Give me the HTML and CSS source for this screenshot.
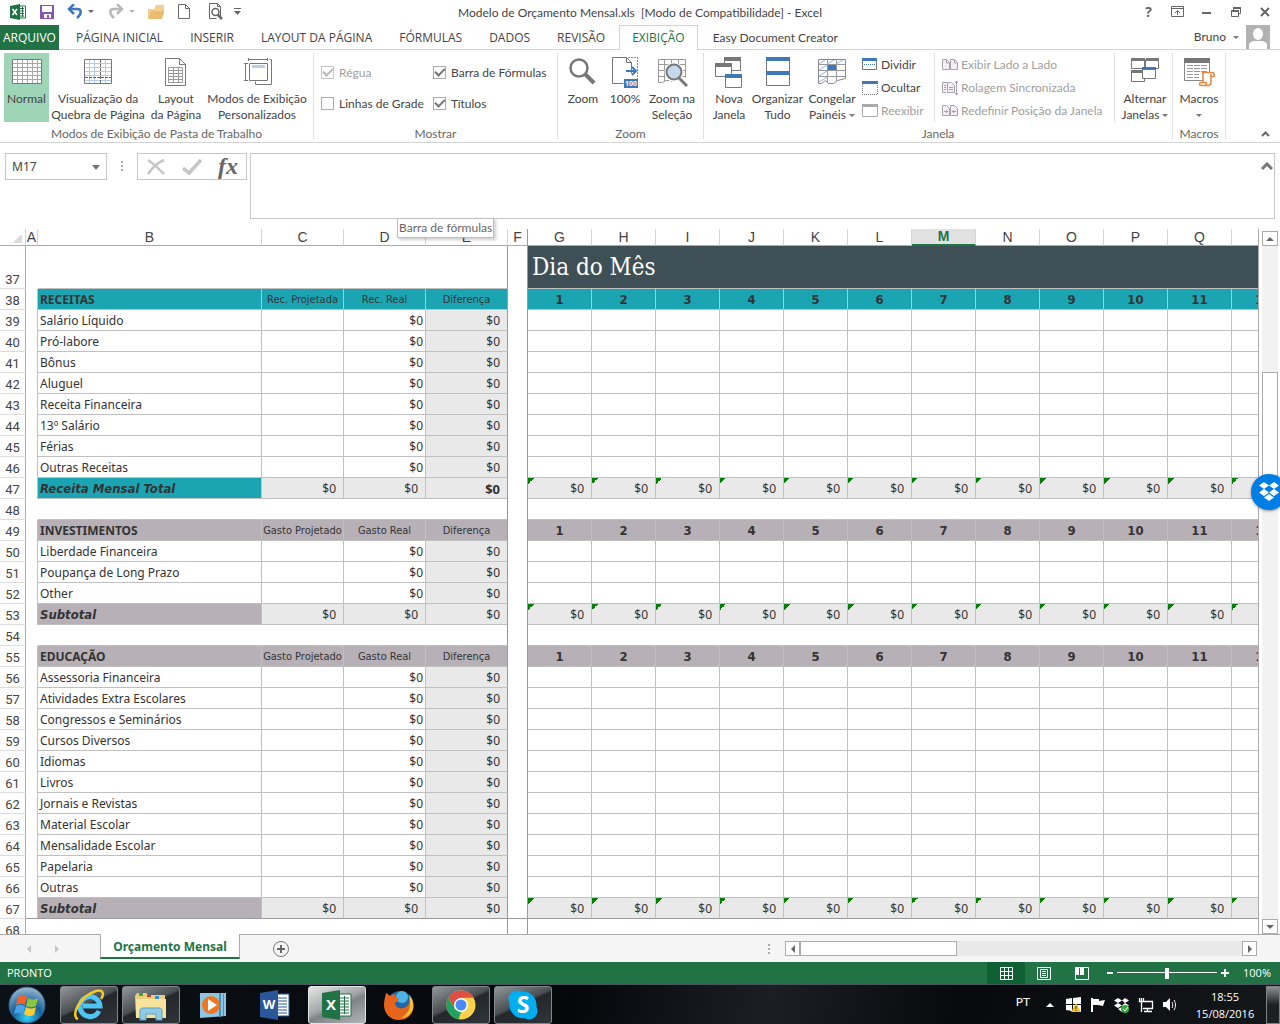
FILE: index.html
```html
<!DOCTYPE html>
<html lang="pt-BR">
<head>
<meta charset="utf-8">
<title>Modelo de Orçamento Mensal.xls - Excel</title>
<link rel="stylesheet" href="styles.css">
</head>
<body>
<header class="titlebar">
  <div class="quick">
    <span class="q q-app"><svg width="16" height="16" viewBox="0 0 16 16"><path d="M9 2h6.500v12H9z" fill="#fff" stroke="#217346"/><path d="M10 4.500h4M10 7h4M10 9.500h4M10 12h4M12.500 3v10" stroke="#217346"/><path d="M0 2l10-2v16L0 14z" fill="#217346"/><path d="M2.500 5l4.500 6M7 5l-4.500 6" stroke="#fff" stroke-width="1.600"/></svg></span>
    <button class="q q-save" aria-label="Salvar"><svg width="14" height="14" viewBox="0 0 14 14"><path d="M0 0h14v14H0z" fill="#8a55b0"/><path d="M2 1h10v6H2zM4 9h7v4H9v-3H7v3H4z" fill="#fff"/></svg></button>
    <button class="q q-undo" aria-label="Desfazer"><svg width="30" height="16" viewBox="0 0 30 16"><path d="M4 5h7c5 0 5 5 0 9" fill="none" stroke="#3f78b8" stroke-width="2.500"/><path d="M8 0L3 5l5 5" fill="none" stroke="#3f78b8" stroke-width="2.500"/><path d="M22 6h6l-3 3z" fill="#666"/></svg></button>
    <button class="q q-redo" aria-label="Refazer"><svg width="30" height="16" viewBox="0 0 30 16"><path d="M14 5H7c-5 0-5 5 0 9" fill="none" stroke="#b9b9b9" stroke-width="2.500"/><path d="M10 0l5 5-5 5" fill="none" stroke="#b9b9b9" stroke-width="2.500"/><path d="M22 6h6l-3 3z" fill="#b5b5b5"/></svg></button>
    <button class="q q-open" aria-label="Abrir"><svg width="16" height="14" viewBox="0 0 16 14"><path d="M0 13V4h6l2-4h8v10" fill="#f3cf92"/><path d="M0 14l3-8h13l-2 8z" fill="#eabc70"/></svg></button>
    <button class="q q-new" aria-label="Novo"><svg width="12" height="15" viewBox="0 0 12 15"><path d="M.5.500h7l4 4v10H.5zM7.500.500v4h4" fill="#fff" stroke="#666"/></svg></button>
    <button class="q q-prev" aria-label="Visualizar impressão"><svg width="15" height="17" viewBox="0 0 15 17"><path d="M12.500 15V3.500L9.500.500h-8v15h7M9.500.500v3h3" fill="none" stroke="#666"/><circle cx="7.500" cy="9" r="3.500" fill="#fff" stroke="#666" stroke-width="1.500"/><path d="M10 12l4 4" stroke="#666" stroke-width="2.500"/></svg></button>
    <button class="q q-more" aria-label="Personalizar"><svg width="7" height="8" viewBox="0 0 7 8"><path d="M0 .5h7" stroke="#666"/><path d="M0 3h7L3.500 7z" fill="#666"/></svg></button>
  </div>
  <h1 class="doc-title">Modelo de Orçamento Mensal.xls&nbsp; [Modo de Compatibilidade] - Excel</h1>
  <div class="winbtns">
    <button class="wb help" aria-label="Ajuda">?</button>
    <button class="wb" aria-label="Opções da faixa"><svg width="13" height="11" viewBox="0 0 13 11"><path d="M.5.500h12v10H.5zM1 2.500h11M6.500 9V5M4 7l2.500-2.500L9 7" fill="none" stroke="#666"/></svg></button>
    <button class="wb" aria-label="Minimizar"><svg width="9" height="9" viewBox="0 0 9 9"><path d="M0 5h9v2H0z" fill="#666"/></svg></button>
    <button class="wb" aria-label="Restaurar"><svg width="10" height="10" viewBox="0 0 10 10"><path d="M.5 4h7v5.500h-7zM2.500 3V1h7v5.500H8" fill="none" stroke="#666"/><path d="M0 3h8v2H0zM2 0h8v2H2z" fill="#666"/></svg></button>
    <button class="wb" aria-label="Fechar"><svg width="10" height="10" viewBox="0 0 10 10"><path d="M1 1l8 8M9 1L1 9" stroke="#666" stroke-width="2"/></svg></button>
  </div>
</header>

<nav class="tabs">
  <button class="tab file">ARQUIVO</button>
  <button class="tab">PÁGINA INICIAL</button>
  <button class="tab">INSERIR</button>
  <button class="tab">LAYOUT DA PÁGINA</button>
  <button class="tab">FÓRMULAS</button>
  <button class="tab">DADOS</button>
  <button class="tab">REVISÃO</button>
  <button class="tab active">EXIBIÇÃO</button>
  <button class="tab addin">Easy Document Creator</button>
  <button class="user">Bruno <i class="caret"></i>
    <svg width="24" height="24" viewBox="0 0 24 24"><path d="M0 0h24v24H0z" fill="#b2b2b2"/><ellipse cx="12" cy="9" rx="5" ry="6" fill="#fff"/><path d="M3 24v-4c0-3 4-4 6-4h6c2 0 6 1 6 4v4z" fill="#fff"/></svg>
  </button>
</nav>

<section class="ribbon">
  <div class="group g-views">
    <div class="tools">
      <button class="big on b-normal"><svg width="32" height="32" viewBox="0 0 32 32"><path d="M1.500 3.500h29v24h-29z" fill="#fff" stroke="#777"/><path d="M2 7.500h28M2 11.500h28M2 15.500h28M2 19.500h28M2 23.500h28M6.500 4v23M11.500 4v23M16.500 4v23M21.500 4v23M26.500 4v23" stroke="#a6a6a6"/></svg><span>Normal</span></button>
      <button class="big b-break"><svg width="32" height="32" viewBox="0 0 32 32"><path d="M2.500 3.500h27v24h-27z" fill="#fff" stroke="#777"/><path d="M3 7.500h26M3 11.500h26M3 15.500h26M3 19.500h26M3 24.500h26M7.500 4v23M12.500 4v23M23.500 4v23" stroke="#b3cdea"/><path d="M18.500 4v23M3 21.500h26" stroke="#666" stroke-dasharray="3 1"/></svg><span>Visualização da<br>Quebra de Página</span></button>
      <button class="big b-layout"><svg width="32" height="32" viewBox="0 0 32 32"><path d="M5.500 2.500h14l6 6v21h-20zM19.500 2.500v6h6" fill="#fff" stroke="#777"/><path d="M8.500 11.500h14v15h-14zM8 14.500h15M8 17.500h15M8 20.500h15M8 23.500h15M13.500 11v16M18.500 11v16" fill="none" stroke="#999"/></svg><span>Layout<br>da Página</span></button>
      <button class="big b-custom"><svg width="32" height="32" viewBox="0 0 32 32"><path d="M8.500 7.500h18v17h-18z" fill="#fff" stroke="#777"/><path d="M11 9h13v3H11z" fill="#b9cfea"/><path d="M7.500 3.500h19M7.500 2v3M26.500 2v3M4.500 7v17M3 7.500h4M3 24.500h4M28.500 3.500h2v25h-16v-3" fill="none" stroke="#777"/></svg><span>Modos de Exibição<br>Personalizados</span></button>
    </div>
    <div class="gname">Modos de Exibição de Pasta de Trabalho</div>
  </div>
  <div class="group g-show">
    <div class="tools checks">
      <label class="off"><input type="checkbox" checked disabled>Régua</label>
      <label><input type="checkbox" checked>Barra de Fórmulas</label>
      <label><input type="checkbox">Linhas de Grade</label>
      <label><input type="checkbox" checked>Títulos</label>
    </div>
    <div class="gname">Mostrar</div>
  </div>
  <div class="group g-zoom">
    <div class="tools">
      <button class="big b-zoom"><svg width="32" height="32" viewBox="0 0 32 32"><circle cx="12" cy="12" r="8.500" fill="#fff" stroke="#777" stroke-width="2.500"/><path d="M18 18l9 9" stroke="#777" stroke-width="4"/></svg><span>Zoom</span></button>
      <button class="big b-100"><svg width="32" height="32" viewBox="0 0 32 32"><path d="M3.500 1.500h14l5 5v11M17.500 1.500v5h5M3.500 1.500v26h11" fill="none" stroke="#777"/><path d="M19 1.500h9.500V23" fill="none" stroke="#888" stroke-dasharray="2 1"/><path d="M17 15h9M23 11l4 4-4 4" fill="none" stroke="#3f78b8" stroke-width="2"/><path d="M15 23h14v9H15z" fill="#3f78b8"/><text x="22" y="30" font-size="7" font-weight="700" fill="#fff" text-anchor="middle">100</text></svg><span>100%</span></button>
      <button class="big b-sel"><svg width="32" height="32" viewBox="0 0 32 32"><path d="M2.500 3.500h27v18M2.500 3.500v23h4l3-2h4M2 8.500h27M2 14.500h27M2 20.500h27M8.500 4v22M15.500 4v22M22.500 4v18" fill="none" stroke="#999"/><circle cx="18" cy="16" r="7.500" fill="#c5d9ee" stroke="#fff" stroke-width="4"/><circle cx="18" cy="16" r="7.500" fill="#c5d9ee" stroke="#777" stroke-width="2"/><path d="M23 22l8 8" stroke="#777" stroke-width="3"/></svg><span>Zoom na<br>Seleção</span></button>
    </div>
    <div class="gname">Zoom</div>
  </div>
  <div class="group g-window">
    <div class="tools">
      <button class="big b-nova"><svg width="32" height="32" viewBox="0 0 32 32"><g fill="#fff" stroke="#777"><path d="M11.500 2.500h16v12h-16z"/><path d="M2.500 8.500h16v12h-16z"/><path d="M12.500 18.500h16v13h-16z"/></g><path d="M11 1h17v4H11zM2 7h17v4H2z" fill="#777"/><path d="M12 18h17v4H12z" fill="#3f78b8"/></svg><span>Nova<br>Janela</span></button>
      <button class="big b-org"><svg width="32" height="32" viewBox="0 0 32 32"><path d="M4.500 1.500h23v28h-23z" fill="#fff" stroke="#777"/><path d="M4 1h24v4H4zM4 15h24v4H4z" fill="#3f78b8"/></svg><span>Organizar<br>Tudo</span></button>
      <button class="big b-freeze"><svg width="32" height="32" viewBox="0 0 32 32"><path d="M2.500 3.500h27v19l-8 2-4 3h-5l-3-3-4 3h-3z" fill="#fff" stroke="#888"/><path d="M3 8.500h26M3 14.500h26M3 20.500h26M11.500 4v22M20.500 4v21" stroke="#999"/><path d="M3 8l6-4M11 8l7-4M20 8l7-4M3 14l8-5M3 20l8-5M3 26l8-5" stroke="#8db8e4"/><path d="M12 9h8v5h-8z" fill="#3f78b8"/></svg><span>Congelar<br>Painéis <i class="caret"></i></span></button>
      <div class="col c-split">
        <button class="small"><svg width="16" height="14" viewBox="0 0 16 14"><path d="M.5.500h14v11H.5z" fill="#fff" stroke="#777"/><path d="M0 0h15v3H0z" fill="#3f78b8"/><path d="M2 6.500h11" stroke="#3f78b8" stroke-dasharray="1 1"/></svg>Dividir</button>
        <button class="small"><svg width="16" height="14" viewBox="0 0 16 14"><path d="M.5 3v10.500h15V3" fill="none" stroke="#777" stroke-dasharray="1 1"/><path d="M0 0h16v3H0z" fill="#3f78b8"/></svg>Ocultar</button>
        <button class="small off"><svg width="16" height="14" viewBox="0 0 16 14"><path d="M.5.500h15v12H.5z" fill="#fff" stroke="#aaa"/><path d="M0 0h16v3H0z" fill="#aaa"/></svg>Reexibir</button>
      </div>
      <div class="col c-side">
        <button class="small off"><svg width="16" height="14" viewBox="0 0 16 14"><path d="M.5 1.500h4l3 3v7h-7zM8.500 1.500h4l3 3v7h-7zM4.500 2v3h3M12.500 2v3h3" fill="#f4eef4" stroke="#a9a3a9"/></svg>Exibir Lado a Lado</button>
        <button class="small off"><svg width="16" height="14" viewBox="0 0 16 14"><path d="M5.500 1.500h4l3 3v7h-7zM5 1.500H.5v10H4M2 4.500h2M2 6.500h2M2 8.500h2M7 6.500h4M7 8.500h4M14.500 0v14M13 2l1.500-2L16 2M13 12l1.500 2 1.500-2" fill="#f4eef4" stroke="#a9a3a9"/></svg>Rolagem Sincronizada</button>
        <button class="small off"><svg width="16" height="14" viewBox="0 0 16 14"><path d="M.5 1.500h4l3 3v7h-7zM8.500 1.500h4l3 3v7h-7zM2 7.500h4M4.500 6v3M10 7.500h4M11.500 6v3" fill="#f4eef4" stroke="#a9a3a9"/></svg>Redefinir Posição da Janela</button>
      </div>
      <button class="big b-switch"><svg width="32" height="32" viewBox="0 0 32 32"><g fill="#fff" stroke="#777"><path d="M2.500 3.500h13v9h-13zM16.500 3.500h13v9h-13zM2.500 15.500h13v10h-13z"/><path d="M13.500 11.500h13v11h-13z"/></g><path d="M2 2h14v3H2zM17 2h13v3H17zM2 14h11v3H2z" fill="#777"/><path d="M13 11h14v3H13z" fill="#3f78b8"/></svg><span>Alternar<br>Janelas <i class="caret"></i></span></button>
    </div>
    <div class="gname">Janela</div>
  </div>
  <div class="group g-macros">
    <div class="tools">
      <button class="big b-macros"><svg width="32" height="32" viewBox="0 0 32 32"><path d="M1.500 3.500h25v21h-25z" fill="#fff" stroke="#888"/><path d="M1 2h26v5H1z" fill="#777"/><path d="M4 9.500h20M4 12.500h20M4 15.500h20M4 18.500h12M4 21.500h12" stroke="#999" stroke-dasharray="6 1"/><path d="M20 16.500h9.500c1 0 1.500 1 1.500 2v2h-3v6c0 2-1 3-3 3h-7c-2 0-2-3 0-3h2v-8c0-1-1-2 0-2z" fill="#fff" stroke="#e8863a" stroke-width="1.500"/><path d="M28 20v-2M20 26.500h3v1c0 1 1 2 2 2" fill="none" stroke="#e8863a" stroke-width="1.500"/></svg><span>Macros<br><i class="caret"></i></span></button>
    </div>
    <div class="gname">Macros</div>
  </div>
  <button class="collapse" aria-label="Recolher"><svg width="9" height="6" viewBox="0 0 9 6"><path d="M1 5l3.500-3.500L8 5" fill="none" stroke="#666" stroke-width="2"/></svg></button>
</section>

<section class="formula">
  <div class="namebox"><input type="text" value="M17" aria-label="Caixa de nome"><button aria-label="Nomes"><i class="caret wide"></i></button></div>
  <span class="grip"></span>
  <div class="fx">
    <button aria-label="Cancelar"><svg width="20" height="18" viewBox="0 0 20 18"><path d="M2 2c5 3 10 8 16 14M18 2C11 5 6 10 2 16" fill="none" stroke="#c6c6c6" stroke-width="2.500"/></svg></button>
    <button aria-label="Inserir"><svg width="20" height="18" viewBox="0 0 20 18"><path d="M1 10l6 5L19 2" fill="none" stroke="#c6c6c6" stroke-width="3.500"/></svg></button>
    <button class="fxb" aria-label="Inserir função">fx</button>
  </div>
  <div class="fbox"><textarea aria-label="Barra de fórmulas"></textarea>
    <button aria-label="Recolher barra"><svg width="12" height="9" viewBox="0 0 12 9"><path d="M1 7l5-5 5 5" fill="none" stroke="#777" stroke-width="3"/></svg></button></div>
  <div class="tip" role="tooltip">Barra de fórmulas</div>
</section>

<main class="sheet">
  <div class="gridwrap"><table class="grid">
    <colgroup><col class="w-h"><col class="w-a"><col class="w-b"><col class="w-c"><col class="w-c"><col class="w-c"><col class="w-f"><col class="w-d" span="12"></colgroup>
    <thead id="head"></thead>
    <tbody id="body"></tbody>
  </table></div>
  <div class="vscroll">
    <button aria-label="Subir"><i class="tri up"></i></button>
    <div class="space-a"></div><div class="thumb"></div><div class="space-b"></div>
    <button aria-label="Descer"><i class="tri down"></i></button>
  </div>
  <button class="dropbox" aria-label="Dropbox"><svg width="22" height="20" viewBox="0 0 22 20"><path d="M6 0l5 3.500L6 7 1 3.500zM16 0l5 3.500L16 7l-5-3.500zM6 7l5 3.500L6 14l-5-3.500zM16 7l5 3.500-5 3.500-5-3.500zM11 12l5 3.500-5 3.500-5-3.500z" fill="#fff"/></svg></button>
</main>

<footer class="sheettabs">
  <div class="nav"><button aria-label="Anterior"><i class="tri left pale"></i></button><button aria-label="Próxima"><i class="tri right pale"></i></button></div>
  <button class="stab">Orçamento Mensal</button>
  <button class="add" aria-label="Nova planilha"><svg width="16" height="16" viewBox="0 0 16 16"><circle cx="8" cy="8" r="7.500" fill="none" stroke="#777"/><path d="M8 4v8M4 8h8" stroke="#666" stroke-width="2"/></svg></button>
  <span class="grip"></span>
  <div class="hscroll">
    <button aria-label="Esquerda"><i class="tri left"></i></button><div class="thumb"></div>
    <button aria-label="Direita"><i class="tri right"></i></button>
  </div>
</footer>

<div class="status">
  <span class="ready">PRONTO</span>
  <button class="view sel" aria-label="Normal"><svg width="13" height="13" viewBox="0 0 13 13"><path d="M.5.500h12v12H.5zM4.500 0v13M8.500 0v13M0 4.500h13M0 8.500h13" fill="none" stroke="#fff"/></svg></button>
  <button class="view" aria-label="Layout da página"><svg width="14" height="13" viewBox="0 0 14 13"><path d="M.5.500h13v12H.5zM3.500 2.500h7v8h-7zM5 4.500h4M5 6.500h4M5 8.500h4" fill="none" stroke="#fff"/></svg></button>
  <button class="view" aria-label="Quebra de página"><svg width="14" height="13" viewBox="0 0 14 13"><path d="M.5.500h13v12H.5z" fill="none" stroke="#fff"/><path d="M0 0h4v8H0zM5 0h4v8H5z" fill="#fff"/></svg></button>
  <button class="zb" aria-label="Reduzir"><svg width="9" height="9" viewBox="0 0 9 9"><path d="M2 4h6" stroke="#fff" stroke-width="2"/></svg></button>
  <input type="range" class="zoom" min="0" max="100" value="50" aria-label="Zoom">
  <button class="zb" aria-label="Ampliar"><svg width="9" height="9" viewBox="0 0 9 9"><path d="M0 4h8M4 0v8" stroke="#fff" stroke-width="2"/></svg></button>
  <span class="pct">100%</span>
</div>

<div class="taskbar">
  <button class="start" aria-label="Iniciar"><svg width="38" height="38" viewBox="0 0 38 38"><defs><radialGradient id="orb" cx=".5" cy=".85" r=".8"><stop offset="0" stop-color="#2fd0f8"/><stop offset=".5" stop-color="#17609a"/><stop offset="1" stop-color="#8fb3cc"/></radialGradient></defs><circle cx="19" cy="19" r="18" fill="url(#orb)" stroke="#355a78"/><path d="M10 11c3-2 6-2 9 0l-2 8c-3-2-6-1-9 0z" fill="#f0622a"/><path d="M20 12c3 2 6 2 10 0l-2 8c-4 2-7 1-10 0z" fill="#8cc63f"/><path d="M8 20c3-2 6-2 9 0l-2 8c-3-2-6-1-9 0z" fill="#4aa3e8"/><path d="M18 21c3 2 6 2 10 0l-2 8c-4 2-7 1-10-1z" fill="#fccb2e"/></svg></button>
  <button class="app run" aria-label="Internet Explorer"><svg width="34" height="34" viewBox="0 0 34 34"><path d="M27 23a10 10 0 1 1 1-5H11" fill="none" stroke="#4cc4f4" stroke-width="5"/><path d="M6 31C-2 28 8 8 24 3c8-2 8 4 5 8" fill="none" stroke="#f6c824" stroke-width="2.500"/></svg></button>
  <button class="app run" aria-label="Explorer"><svg width="34" height="34" viewBox="0 0 34 34"><path d="M1 8l2-3h9l2 2h17v23H2z" fill="#e9cf7c"/><path d="M2 11h30v19H2z" fill="#f7e39b"/><path d="M5 5h4v3H5z" fill="#3aa53a"/><path d="M13 7h4v2h-4z" fill="#d63a2a"/><path d="M21 8h4v3h-4z" fill="#2a8fd6"/><path d="M6 32v-9c0-2 1-3 3-3h16c2 0 3 1 3 3v9h-6v-6H12v6z" fill="#8fcbe6" stroke="#5aa0c4"/></svg></button>
  <button class="app" aria-label="Media Player"><svg width="28" height="28" viewBox="0 0 28 28"><path d="M1 2h26v23L1 27z" fill="#8ec5e2"/><path d="M20 2h2v24h-2zM24 3h1v22h-1z" fill="#4a90b8"/><circle cx="12" cy="14" r="9" fill="#f0761e"/><path d="M9 8l9 6-9 6z" fill="#fff"/></svg></button>
  <button class="app" aria-label="Word"><svg width="30" height="30" viewBox="0 0 30 30"><path d="M16 4h13v22H16z" fill="#fff" stroke="#2b579a"/><path d="M18 8h9M18 11h9M18 14h9M18 17h9M18 20h9M18 23h9" stroke="#2b579a"/><path d="M0 3l18-3v30L0 27z" fill="#2b579a"/><text x="9" y="19" font-size="13" font-weight="700" fill="#fff" text-anchor="middle">W</text></svg></button>
  <button class="app run cur" aria-label="Excel"><svg width="30" height="30" viewBox="0 0 30 30"><path d="M16 4h13v22H16z" fill="#fff" stroke="#217346"/><path d="M18 8h9M18 11h9M18 14h9M18 17h9M18 20h9M18 23h9M22.500 6v18" stroke="#217346"/><path d="M0 3l18-3v30L0 27z" fill="#217346"/><text x="9" y="20" font-size="15" font-weight="700" fill="#fff" text-anchor="middle">X</text></svg></button>
  <button class="app" aria-label="Firefox"><svg width="32" height="32" viewBox="0 0 32 32"><circle cx="17" cy="15" r="13" fill="#2268a8"/><circle cx="19" cy="8" r="6" fill="#4fb4e4"/><path d="M3 4c2 1 3 2 4 3l5-2c0 3 1 4 4 5l-4 4c0 5 6 7 11 4 3-2 4-5 3-9 4 3 5 7 4 12-3 8-9 10-14 10C6 31 1 23 1 16c0-4 1-8 2-12z" fill="#e8641c"/><path d="M26 6c5 5 6 12 2 18-3 4-7 5-10 5 8-4 11-12 8-23z" fill="#fbc02a"/></svg></button>
  <button class="app run" aria-label="Chrome"><svg width="30" height="30" viewBox="0 0 30 30"><circle cx="15" cy="15" r="14.500" fill="#fbd14b"/><path d="M2.400 7.800A14.500 14.500 0 0 1 27.600 7.800H15L9 19z" fill="#dd4f43"/><path d="M2.400 7.800L9 19l6 3.500-2.500 6.800A14.500 14.500 0 0 1 2.400 7.800z" fill="#1da362"/><circle cx="15" cy="15" r="7" fill="#fff"/><circle cx="15" cy="15" r="5.500" fill="#4a8af4"/></svg></button>
  <button class="app run" aria-label="Skype"><svg width="30" height="30" viewBox="0 0 30 30"><circle cx="9" cy="9" r="8.500" fill="#00aff0"/><circle cx="21" cy="21" r="8.500" fill="#00aff0"/><circle cx="15" cy="15" r="13.500" fill="#00aff0"/><text x="15" y="23" font-size="23" font-weight="700" fill="#fff" text-anchor="middle">S</text></svg></button>
  <div class="tray">
    <span class="lang">PT</span>
    <button aria-label="Ícones ocultos"><i class="tri up white"></i></button>
    <svg width="16" height="16" viewBox="0 0 16 16"><path d="M0 2l6-1v6H0zM7 1l8-1v7H7zM0 8h6v6l-6-1zM7 8h8v7l-8-1z" fill="#fff"/><path d="M10 6l5 9H5z" fill="#f7c21c"/><path d="M10 9v3M10 13v1" stroke="#333"/></svg>
    <svg width="16" height="16" viewBox="0 0 16 16"><path d="M2 1v14" stroke="#fff" stroke-width="2"/><path d="M3 2h6v2l6-1-2 6-5-1H3z" fill="#fff"/></svg>
    <svg width="16" height="16" viewBox="0 0 16 16"><path d="M4 1l4 2.500L4 6 0 3.500zM11 1l4 2.500L11 6 8 3.500zM4 6l4 2.500L4 11 0 8.500zM11 6l4 2.500-4 2.500-3-2.500zM8 10l3 2-3 3-4-3z" fill="#fff"/><circle cx="11" cy="12" r="4" fill="#2fae3b"/><path d="M9 12l2 2 3-4" fill="none" stroke="#fff"/></svg>
    <svg width="16" height="16" viewBox="0 0 16 16"><path d="M5 4.500h9.500v7H5M9.500 12v2M6 14.500h8M3.500 6v9M1.500 1v3.500h4V1M3.500 1v5" fill="none" stroke="#fff" stroke-width="1.300"/></svg>
    <svg width="16" height="16" viewBox="0 0 16 16"><path d="M1 5h3l4-4v13l-4-4H1z" fill="#fff"/><path d="M10 5c1 2 1 4 0 6M12 3c2 3 2 7 0 10" fill="none" stroke="#fff"/></svg>
    <span class="clock">18:55<br>15/08/2016</span>
    <button class="desk" aria-label="Mostrar área de trabalho"></button>
  </div>
</div>
<script src="grid.js"></script>
</body>
</html>
```
FILE: grid.js
```js
// Budget sections, each placed from its first sheet row number
const sections = [
  { start: 38, tone: "teal", name: "RECEITAS", heads: ["Rec. Projetada", "Rec. Real", "Diferença"],
    items: ["Salário Líquido", "Pró-labore", "Bônus", "Aluguel", "Receita Financeira", "13º Salário", "Férias", "Outras Receitas"],
    total: "Receita Mensal Total" },
  { start: 49, tone: "mauve", name: "INVESTIMENTOS", heads: ["Gasto Projetado", "Gasto Real", "Diferença"],
    items: ["Liberdade Financeira", "Poupança de Long Prazo", "Other"], total: "Subtotal" },
  { start: 55, tone: "mauve", name: "EDUCAÇÃO", heads: ["Gasto Projetado", "Gasto Real", "Diferença"],
    items: ["Assessoria Financeira", "Atividades Extra Escolares", "Congressos e Seminários", "Cursos Diversos", "Idiomas",
      "Livros", "Jornais e Revistas", "Material Escolar", "Mensalidade Escolar", "Papelaria", "Outras"], total: "Subtotal" }
];
const days = Array.from({ length: 12 }, (_, i) => i + 1);
const each = (cls, fn) => days.map(d => `<td class="${cls}">${fn(d)}</td>`).join("");
const row = (n, cls, cells) => `<tr class="${cls}"><th scope="row">${n}</th>${cells}</tr>`;
const blank = n => row(n, "blank", `<td></td><td></td><td></td><td></td><td class="e"></td><td class="f"></td><td colspan="12"></td>`);

document.getElementById("head").innerHTML = `<tr><th class="corner"></th>` +
  [..."ABCDEFGHIJKLMNOPQR"].map(c => `<th scope="col" class="${c === "M" ? "picked" : c === "F" ? "f" : ""}">${c}</th>`).join("") + `</tr>`;

let html = row(37, "title", `<td></td><td></td><td></td><td></td><td class="e"></td><td class="f"></td><td class="banner" colspan="12">Dia do Mês</td>`);
for (const s of sections) {
  html += row(s.start, "head " + s.tone, `<td class="a"></td><td class="name">${s.name}</td><td class="sub">${s.heads[0]}</td><td class="sub">${s.heads[1]}</td><td class="sub e">${s.heads[2]}</td><td class="f"></td>` + each("day", d => d));
  let n = s.start + 1;
  for (const t of s.items)
    html += row(n++, "item", `<td class="a"></td><td>${t}</td><td></td><td class="num">$0</td><td class="num wide e">$0</td><td class="f"></td>` + each("", () => ""));
  html += row(n++, "total " + s.tone, `<td class="a"></td><td class="name">${s.total}</td><td class="num wide">$0</td><td class="num wide">$0</td><td class="num wide e">$0</td><td class="f"></td>` + each("num wide flag", () => "$0"));
  html += blank(n);
}
document.getElementById("body").innerHTML = html;
```
FILE: styles.css
```css
* { box-sizing: border-box; }
body { margin: 0; height: 100vh; display: flex; flex-direction: column; overflow: hidden; background: #fff; color: #444; font: 12px/16px Lato, "Open Sans", sans-serif; }
button { font: inherit; color: inherit; background: none; border: 0; padding: 0; margin: 0; white-space: nowrap; }
svg { display: block; flex: none; }
svg text { font-family: "Open Sans", sans-serif; }
.caret { display: inline-block; border: 3px solid transparent; border-top-color: #777; border-bottom: 0; vertical-align: middle; }
.caret.wide { border-width: 5px 4px 0; }

.titlebar { display: grid; grid-template-columns: 1fr auto 1fr; height: 25px; flex: none; align-items: center; }
.quick { display: flex; align-items: center; padding-left: 3px; }
.q { display: flex; justify-content: center; align-items: center; height: 25px; padding-bottom: 2px; width: 30px; }
.q-save { width: 28px; } .q-undo { width: 40px; } .q-redo { width: 42px; } .q-open { width: 26px; }
.q-prev { width: 32px; } .q-more { width: 13px; }
.doc-title { margin: 0; font-size: 12px; font-weight: 400; line-height: 24px; }
.winbtns { display: flex; justify-content: flex-end; padding-right: 1px; }
.wb { width: 29px; height: 25px; padding-bottom: 2px; display: flex; align-items: center; justify-content: center; color: #666; }
.help { font: 700 14px/22px "Open Sans", sans-serif; }

.tabs { display: flex; flex: none; height: 25px; border-bottom: 1px solid #d4d4d4; font-family: "Open Sans", sans-serif; }
.tab { padding: 2px 14px 0 13px; height: 24px; line-height: 22px; }
.tab.file { background: #217346; color: #fff; width: 59px; height: 25px; padding: 1px 0 0; margin-right: 4px; }
.tab.active { color: #217346; border: 1px solid #d4d4d4; border-bottom: 0; background: #fff; height: 25px; padding: 0 12px; }
.tab.addin { font-family: Lato, sans-serif; padding-left: 15px; }
.user { margin-left: auto; display: flex; align-items: center; gap: 7px; padding-right: 10px; font-family: Lato, sans-serif; }

.ribbon { display: flex; flex: none; height: 93px; border-bottom: 1px solid #d4d4d4; padding-top: 3px; }
.group { display: flex; flex-direction: column; border-right: 1px solid #e1e1e1; height: 86px; }
.tools { display: flex; height: 73px; padding: 0 4px; flex: none; }
.gname { text-align: center; color: #666; white-space: nowrap; }
.g-views { width: 314px; } .g-show { width: 244px; } .g-zoom { width: 146px; } .g-window { width: 469px; } .g-macros { width: 53px; }
.big { display: flex; flex-direction: column; align-items: center; gap: 3px; padding-top: 3px; height: 69px; flex: none; text-align: center; }
.on { background: #9fd5b7; }
.b-normal { width: 45px; } .b-break { width: 98px; } .b-layout { width: 58px; } .b-custom { width: 104px; }
.g-zoom .tools { padding: 0 2px; }
.b-zoom { width: 46px; } .b-100 { width: 38px; } .b-sel { width: 56px; }
.g-window .tools { padding: 0 3px; }
.b-nova { width: 44px; } .b-org { width: 53px; } .b-freeze { width: 56px; } .b-switch { width: 54px; margin-left: 3px; }
.g-macros .tools { padding: 0; } .b-macros { width: 52px; }
.col { display: flex; flex-direction: column; }
.small { display: flex; align-items: center; gap: 3px; height: 23px; text-align: left; }
.c-split { width: 75px; flex: none; padding-left: 2px; border-right: 1px solid #e1e1e1; height: 69px; }
.c-side { width: 180px; flex: none; padding-left: 7px; border-right: 1px solid #e1e1e1; height: 69px; }
.off { color: #a0a0a0; }
.checks { display: grid; grid-template-columns: 112px auto; grid-auto-rows: 31px; padding: 4px 7px; justify-content: start; }
.checks label { display: flex; align-items: center; gap: 5px; white-space: nowrap; }
.checks input { appearance: none; width: 13px; height: 13px; margin: 0; border: 1px solid #ababab; background: #fff; display: grid; place-items: center; }
.checks input:checked::before { content: ""; width: 8px; height: 4px; border: solid #777; border-width: 0 0 2px 2px; rotate: -45deg; margin-bottom: 3px; }
.checks input:disabled { border-color: #c6c6c6; }
.checks input:disabled::before { border-color: #bbb; }
.collapse { margin-left: auto; align-self: flex-end; padding: 0 10px 5px; }

.formula { display: flex; flex: none; padding: 10px 5px; height: 86px; position: relative; align-items: flex-start; }
.namebox { width: 102px; height: 27px; border: 1px solid #c6c6c6; display: flex; align-items: center; }
.namebox input { border: 0; outline: 0; width: 80px; padding: 0 6px; font: 12px "Noto Sans", sans-serif; color: #444; }
.namebox button { width: 20px; height: 20px; line-height: 14px; }
.grip { width: 2px; height: 10px; background: repeating-linear-gradient(#aaa 0 2px, #fff 2px 4px); margin: 8px 14px; flex: none; }
.fx { width: 110px; height: 27px; border: 1px solid #c6c6c6; display: flex; align-items: center; justify-content: space-around; margin-right: 3px; }
.fxb { font: italic 700 24px/22px "Liberation Serif", serif; color: #666; padding-bottom: 2px; }
.fbox { flex: 1; height: 66px; border: 1px solid #c6c6c6; display: flex; align-items: flex-start; }
.fbox textarea { flex: 1; height: 64px; border: 0; resize: none; outline: 0; }
.fbox button { padding: 8px 1px; }
.tip { position: absolute; left: 397px; top: 75px; height: 20px; padding: 0 1px; border: 1px solid #bebebe; background: #fff; color: #666; line-height: 18px; box-shadow: 2px 2px 3px #0003; z-index: 2; }

.sheet { flex: 1; min-height: 0; display: flex; position: relative; overflow: hidden; }
.gridwrap { flex: 1; overflow: hidden; border-right: 1px solid #ababab; }
.grid { border-collapse: separate; border-spacing: 0; table-layout: fixed; width: 1296px; color: #333; font: 12px/16px "Noto Sans", sans-serif; }
.w-h { width: 26px; } .w-a { width: 12px; } .w-b { width: 224px; } .w-c { width: 82px; } .w-f { width: 20px; } .w-d { width: 64px; }
.grid th, .grid td { padding: 2px 2px 0; white-space: nowrap; overflow: hidden; height: 21px; }
.grid thead th { height: 17px; font: 14px/16px "Liberation Sans", sans-serif; color: #444; border-right: 1px solid #d4d4d4; border-bottom: 1px solid #ababab; padding: 0; }
.grid thead .f { border-right-color: #999; }
.grid thead .picked { color: #217346; font-weight: 700; background: #e1e1e1; border-bottom: 2px solid #217346; line-height: 15px; }
.corner { background: linear-gradient(135deg, transparent 50%, #dcdcdc 50%) 13px 5px / 9px 9px no-repeat; }
.grid tbody th { font: 13px/16px Roboto, sans-serif; color: #444; border-right: 1px solid #ababab; border-bottom: 1px solid #dcdcdc; vertical-align: bottom; padding: 4px 0 0; }
.title td, .title th { height: 43px !important; }
.grid .e, .grid .f { border-right: 1px solid #999 !important; }
.item td, .head td, .total td { border-right: 1px solid #c0c0c0; border-bottom: 1px solid #c0c0c0; }
.grid .a { border-bottom: 0; }
.grid tbody .f { border-bottom: 0; background: #fff; }
.title td:nth-child(n+3):not(.f) { border-bottom: 1px solid #c0c0c0; }
.blank:not(:last-child) td:nth-child(n+3):not(.f) { border-bottom: 1px solid #c0c0c0; }
.grid .banner { background: #3f4f56; color: #fff; font: 24px/40px "DejaVu Serif Condensed", "DejaVu Serif", serif; padding: 0 0 0 4px; }
.item .e, .total .num { background-color: #e9e9e9; }
.num { text-align: right; }
.grid .wide { padding-right: 7px; }
.teal td:not(.a, .f, .num) { background: #1ba5b3; }
.mauve td:not(.a, .f, .num) { background: #b7b1b7; }
.head .name { font-weight: 700; }
.sub { font: 11px/16px "DejaVu Sans Condensed", "DejaVu Sans", sans-serif; text-align: center; }
.grid .sub { padding: 2px 0 0; }
.day, .total .name { font: 700 13px/16px "DejaVu Sans Condensed", "DejaVu Sans", sans-serif; }
.day { text-align: center; }
.total .name { font-style: italic; }
.total.teal .num.e { font: 700 13px/16px "Noto Sans", sans-serif; }
.flag { background-image: linear-gradient(135deg, #008000 50%, transparent 50%); background-size: 6px 6px; background-repeat: no-repeat; }
.total:nth-last-child(2) td { border-bottom: 1px solid #999 !important; }
.vscroll { width: 16px; margin: 2px 2px 0 3px; display: flex; flex-direction: column; background: #f2f2f2; }
.vscroll button, .hscroll button { width: 15px; height: 15px; border: 1px solid #ababab; background: #fff; display: grid; place-items: center; flex: none; }
.vscroll button { width: 16px; }
.vscroll .thumb { flex: 133; background: #fff; border: 1px solid #ababab; }
.space-a { flex: 126; } .space-b { flex: 414; }
.tri { display: block; border: 4px solid transparent; }
.up { border-top: 0; border-bottom-color: #666; } .down { border-bottom: 0; border-top-color: #666; }
.left { border-left: 0; border-right-color: #666; } .right { border-right: 0; border-left-color: #666; }
.left.pale { border-right-color: #c6c6c6; } .right.pale { border-left-color: #c6c6c6; } .up.white { border-bottom-color: #fff; }
.dropbox { position: absolute; right: -7px; top: 245px; width: 36px; height: 36px; border-radius: 50%; background: #007ee5; display: grid; place-items: center; box-shadow: 0 1px 3px #0006; }

.sheettabs { height: 28px; flex: none; display: flex; align-items: center; background: #f5f5f5; border-top: 1px solid #ababab; padding-right: 23px; }
.nav { width: 100px; display: flex; gap: 24px; padding-left: 27px; }
.stab { align-self: flex-start; margin-top: -1px; height: 25px; width: 140px; padding-top: 3px; border: 1px solid #ababab; border-top: 0; border-bottom: 2px solid #217346; background: #fff; color: #217346; font: 700 12px/20px "Noto Sans", sans-serif; }
.add { margin-left: 33px; }
.sheettabs .grip { margin: 0 15px 0 auto; }
.hscroll { width: 472px; height: 15px; display: flex; background: #e9e9e9; }
.hscroll .thumb { width: 157px; background: #fff; border: 1px solid #ababab; margin-right: auto; }

.status { height: 22px; flex: none; background: #217346; color: #fff; display: flex; align-items: center; padding-right: 9px; }
.ready { padding-left: 7px; margin-right: auto; font: 11px/22px "Open Sans", sans-serif; }
.view { width: 38px; height: 22px; display: grid; place-items: center; }
.sel { background: #0f6133; }
.zb { width: 12px; display: grid; place-items: center; }
.view + .zb { margin-left: 2px; }
.zoom { appearance: none; width: 100px; height: 12px; margin: 0 2px; background: linear-gradient(#fff, #fff) 0 5px / 100% 1px no-repeat; }
.zoom::-webkit-slider-thumb { appearance: none; width: 4px; height: 11px; background: #fff; }
.pct { width: 40px; text-align: right; font: 11px/22px "Open Sans", sans-serif; }

.taskbar { height: 40px; flex: none; display: flex; align-items: center; padding-top: 1px; background: linear-gradient(100deg, #0c1117, #05080b 45%, #1b1f23 60%, #07090c 75%, #15181b); border-top: 1px solid #46545c; color: #fff; }
.start { width: 60px; padding-left: 8px; }
.app { width: 58px; height: 38px; margin-right: 4px; display: grid; place-items: center; border: 1px solid transparent; border-radius: 3px; }
.run { border-color: #83878b; background: linear-gradient(155deg, #92979a, #4a4f53 45%, #24282c 50%, #30353a); }
.cur { border-color: #e4e4e4; background: linear-gradient(155deg, #e4e5e6, #a4a6a8 45%, #808386 55%, #b4b5b7); }
.tray { margin-left: auto; display: flex; align-items: center; gap: 8px; height: 38px; }
.lang { margin-right: 8px; padding-bottom: 6px; }
.tray button + svg { margin-left: 4px; }
.clock { width: 66px; margin-left: 6px; text-align: center; line-height: 17px; font-family: "Open Sans", sans-serif; font-size: 11px; }
.tray .desk { width: 14px; height: 38px; border: 1px solid #7d8285; background: linear-gradient(#8a8e91, #1c2023 50%); }
```
